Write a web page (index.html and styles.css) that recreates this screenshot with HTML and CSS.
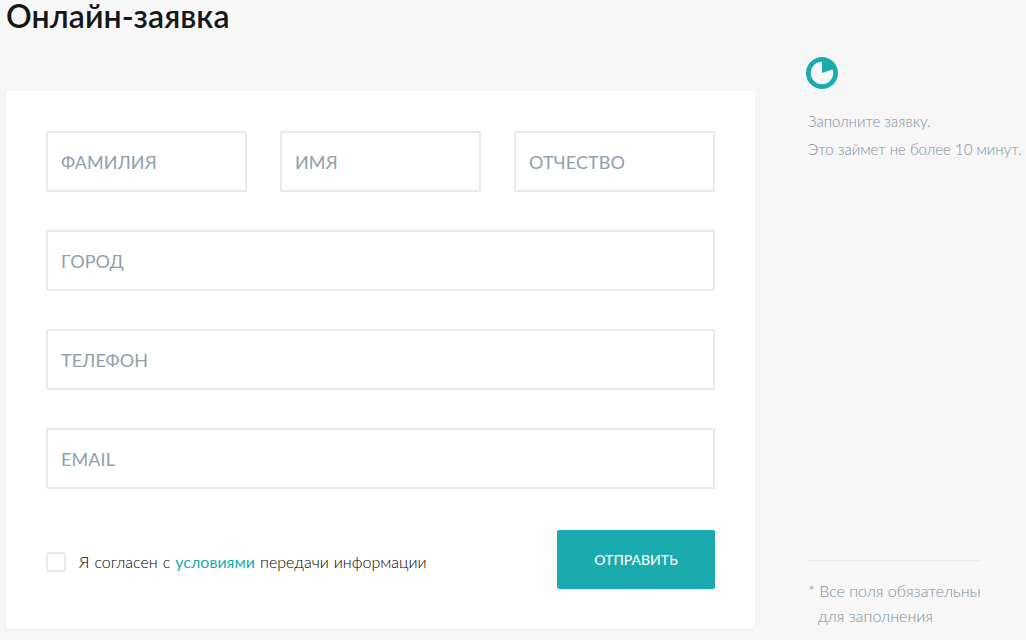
FILE: index.html
```html
<!DOCTYPE html>
<html lang="ru">
<head>
<meta charset="utf-8">
<title>Онлайн-заявка</title>
<link rel="stylesheet" href="styles.css">
</head>
<body>
<div class="layout">
  <main class="main">
    <h1 class="title">Онлайн-заявка</h1>
    <form class="card">
      <div class="row-3">
        <div class="field">ФАМИЛИЯ</div>
        <div class="field">ИМЯ</div>
        <div class="field">ОТЧЕСТВО</div>
      </div>
      <div class="field">ГОРОД</div>
      <div class="field">ТЕЛЕФОН</div>
      <div class="field">EMAIL</div>
      <div class="submit-row">
        <label class="agree"><span class="check"></span><span class="agree-text">Я согласен с <a class="link">условиями</a> передачи информации</span></label>
        <div class="button">ОТПРАВИТЬ</div>
      </div>
    </form>
  </main>
  <aside class="side">
    <svg class="clock" width="32" height="32" viewBox="0 0 32 32">
      <circle cx="16" cy="16" r="13.6" fill="none" stroke="#19abae" stroke-width="4.8"/>
      <path d="M16 2 A14 14 0 0 1 29.3 11.5 L16 16 Z" fill="#19abae"/>
    </svg>
    <p class="note">Заполните заявку.<br>Это займет не более 10 минут.</p>
    <div class="foot">
      <p class="req">* Все поля обязательны<br><span class="indent">для заполнения</span></p>
    </div>
  </aside>
</div>
</body>
</html>
```
FILE: styles.css
```css
* { box-sizing: border-box; }
html, body { margin: 0; height: 640px; overflow: hidden; }
body {
  background: #f7f7f7;
  font-family: Lato, "Noto Sans", sans-serif;
  color: #141817;
}
.layout { display: flex; height: 640px; padding-left: 6px; }
.main { width: 749px; flex: none; }
.title {
  margin: 0;
  height: 91px;
  font-size: 32px;
  font-weight: 600;
  letter-spacing: .08px;
  line-height: 31px;
}
.card {
  height: 538px;
  background: #fff;
  padding: 40px;
  display: flex;
  flex-direction: column;
  gap: 38px;
  box-shadow: 0 1px 3px rgba(0,0,0,.07);
}
.row-3 { display: flex; gap: 33px; }
.row-3 .field { width: 201px; }
.field {
  height: 61px;
  border: 2px solid #e5eaee;
  border-radius: 2px;
  padding-left: 13px;
  display: flex;
  align-items: center;
  font-size: 18px;
  letter-spacing: .1px;
  color: #8f9fac;
}
.submit-row {
  display: flex;
  justify-content: space-between;
  align-items: flex-start;
  margin-top: 3px;
}
.agree {
  display: flex;
  align-items: center;
  gap: 13px;
  padding-top: 22px;
  font-size: 16px;
  font-weight: 300;
  word-spacing: .7px;
  color: #000;
}
.agree-text { position: relative; top: -1px; }
.check {
  width: 20px;
  height: 20px;
  border: 2px solid #e5eaee;
  border-radius: 3px;
}
.link { color: #19abae; font-weight: 400; }
.button {
  width: 158px;
  height: 59px;
  background: #19abae;
  border-radius: 2px;
  color: #fff;
  font-size: 14px;
  font-weight: 500;
  display: flex;
  align-items: center;
  justify-content: center;
}
.side {
  flex: 1;
  padding: 57px 0 12px 47px;
  display: flex;
  flex-direction: column;
  color: #7d8e9b;
  font-weight: 300;
}
.clock { display: block; margin: 0 0 18px 4px; }
.note { margin: 0 0 0 6px; font-size: 15px; line-height: 28px; white-space: nowrap; }
.foot { margin-top: auto; margin-left: 6px; width: 172px; border-top: 1px solid #e8ecef; }
.req { margin: 17px 0 0; font-size: 16px; line-height: 25px; white-space: nowrap; }
.indent { padding-left: 10px; }
```
